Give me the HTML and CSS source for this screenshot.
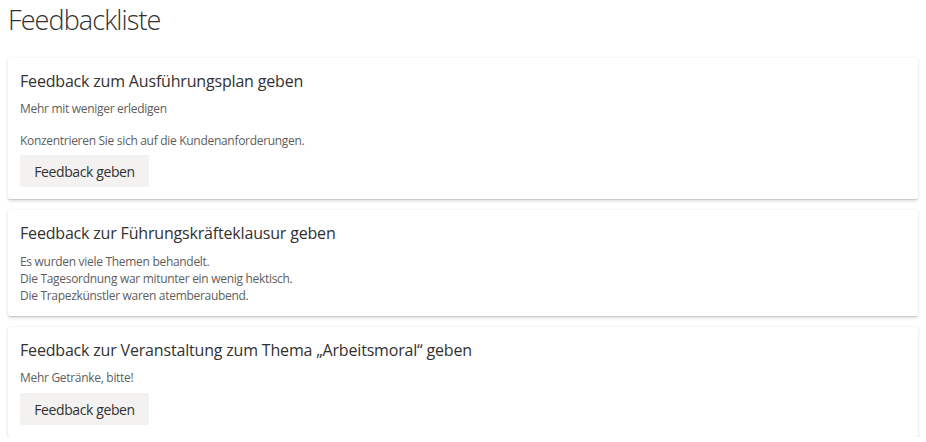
FILE: index.html
```html
<!DOCTYPE html>
<html lang="de">
<head>
<meta charset="utf-8">
<title>Feedbackliste</title>
<link rel="stylesheet" href="styles.css">
</head>
<body>
<h1 class="page-title">Feedbackliste</h1>
<div class="list">
  <section class="card">
    <h2 class="card-title">Feedback zum Ausführungsplan geben</h2>
    <p class="card-text">Mehr mit weniger erledigen<br><br>Konzentrieren Sie sich auf die Kundenanforderungen.</p>
    <button class="btn">Feedback geben</button>
  </section>
  <section class="card">
    <h2 class="card-title">Feedback zur Führungskräfteklausur geben</h2>
    <p class="card-text multi">Es wurden viele Themen behandelt.<br>Die Tagesordnung war mitunter ein wenig hektisch.<br>Die Trapezkünstler waren atemberaubend.</p>
  </section>
  <section class="card">
    <h2 class="card-title">Feedback zur Veranstaltung zum Thema „Arbeitsmoral“ geben</h2>
    <p class="card-text">Mehr Getränke, bitte!</p>
    <button class="btn btn-last">Feedback geben</button>
  </section>
</div>
</body>
</html>
```
FILE: styles.css
```css
html, body {
  background: #ffffff;
}
body {
  margin: 0;
  padding: 0 8px;
  font-family: "Open Sans", "Noto Sans", sans-serif;
  color: #323130;
}
.page-title {
  margin: 0;
  padding-top: 2px;
  height: 58px;
  box-sizing: border-box;
  font-size: 27px;
  line-height: 36px;
  font-weight: 300;
  letter-spacing: -0.9px;
  color: #323130;
}
.list {
  display: flex;
  flex-direction: column;
  gap: 11px;
}
.card {
  background: #fff;
  border-radius: 2px;
  box-shadow: 0 1.6px 3.6px rgba(0,0,0,0.132), 0 0.3px 0.9px rgba(0,0,0,0.108);
  padding: 12px;
  display: flex;
  flex-direction: column;
  align-items: flex-start;
}
.card-title {
  margin: 0 0 9px;
  font-size: 16px;
  line-height: 22px;
  font-weight: 400;
  letter-spacing: -0.18px;
  color: #323130;
}
.card-text {
  margin: 0;
  font-size: 12px;
  line-height: 16px;
  letter-spacing: -0.3px;
  color: #605e5c;
}
.card-text.multi {
  line-height: 17px;
}
.card-text + .btn {
  margin-top: 6px;
}
.card-text + .btn-last {
  margin-top: 7px;
}
.btn {
  font-family: inherit;
  font-size: 14px;
  letter-spacing: -0.4px;
  white-space: nowrap;
  color: #323130;
  background: #f3f2f1;
  border: 0;
  border-radius: 2px;
  height: 32px;
  width: 129px;
  padding: 0;
}
```
